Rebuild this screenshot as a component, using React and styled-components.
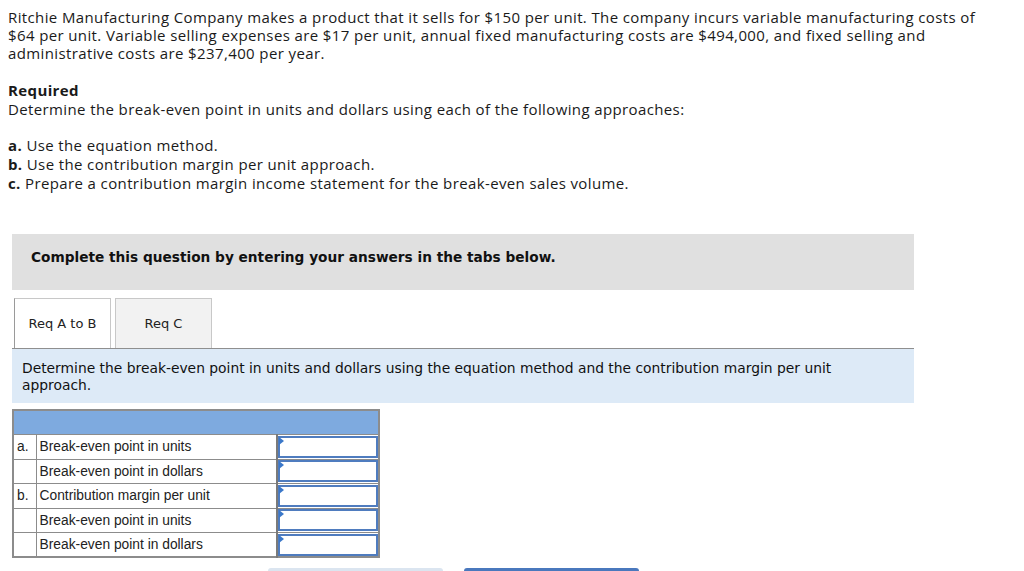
import React from 'react';
import styled, { createGlobalStyle } from 'styled-components';

const GlobalStyle = createGlobalStyle`
  body {
    margin: 0;
    background: #fff;
    color: #1a1a1a;
    font-family: "Open Sans", "Noto Sans", sans-serif;
  }
`;

const Page = styled.div`
  width: 1024px;
  height: 571px;
  overflow: hidden;
  padding: 8px 0 0 8px;
  box-sizing: border-box;
`;

const Prose = styled.p`
  margin: 0;
  font-size: 15px;
  letter-spacing: 0.38px;
  line-height: 18px;
  white-space: nowrap;
`;

const Block = styled.div`
  margin-top: ${(p) => p.$top}px;
  font-size: 15px;
  letter-spacing: 0.38px;
  line-height: 19px;
`;

const Strong = styled.b`
  font-weight: 700;
`;

const Prompt = styled.div`
  margin: 41px 0 0 4px;
  width: 902px;
  height: 56px;
  background: #e0e0e0;
  box-sizing: border-box;
  padding: 15px 0 0 19px;
  font-family: "DejaVu Sans", Verdana, sans-serif;
  font-size: 13.7px;
  font-weight: 700;
  color: #111;
`;

const TabBar = styled.div`
  display: flex;
  gap: 4px;
  margin: 8px 0 0 6px;
  height: 50px;
`;

const Tab = styled.div`
  width: 97px;
  height: 50px;
  box-sizing: border-box;
  display: flex;
  align-items: center;
  justify-content: center;
  font-family: "DejaVu Sans", Verdana, sans-serif;
  font-size: 13px;
  color: #222;
  border: 1px solid #c8c8c8;
  border-bottom: none;
  background: ${(p) => (p.$active ? '#fff' : '#f2f2f2')};
  border-left-color: ${(p) => (p.$active ? '#9a9a9a' : '#c8c8c8')};
`;

const Panel = styled.div`
  margin-left: 4px;
  width: 902px;
  height: 55px;
  box-sizing: border-box;
  background: #ddeaf7;
  border-top: 1px solid #8f8f8f;
  padding: 11px 60px 0 10px;
  font-family: "DejaVu Sans", Verdana, sans-serif;
  font-size: 13.85px;
  line-height: 17px;
  color: #111;
`;

const Table = styled.table`
  margin: 6px 0 0 4px;
  width: 368px;
  border-collapse: collapse;
  font-family: "Liberation Sans", Arial, sans-serif;
  font-size: 13.8px;
  color: #222;
  border: 2px solid #8c8c8c;
`;

const HeadCell = styled.th`
  height: 23px;
  background: #7eaadf;
  padding: 0;
`;

const Row = styled.tr`
  height: 24.5px;
  border-top: 1px solid #8c8c8c;
`;

const Letter = styled.td`
  width: 23px;
  padding: 0 0 0 3px;
  border-right: 1px solid #8c8c8c;
  box-sizing: border-box;
`;

const Label = styled.td`
  padding: 0 0 0 3px;
  border-right: 2px solid #7a7a7a;
`;

const InputCell = styled.td`
  width: 100px;
  padding: 0;
`;

const Field = styled.div`
  position: relative;
  height: 22px;
  border: 2px solid #4f7cbf;
  box-sizing: border-box;
  background: #fff;
  &::before {
    content: '';
    position: absolute;
    left: -1px;
    top: -1px;
    border-top: 4px solid transparent;
    border-bottom: 4px solid transparent;
    border-left: 5px solid #3b78c9;
  }
`;

const Buttons = styled.div`
  display: flex;
  gap: 21px;
  margin: 10px 0 0 260px;
`;

const Button = styled.div`
  width: 175px;
  height: 30px;
  border-radius: 3px;
  background: ${(p) => (p.$primary ? '#4a78bd' : '#dbe5f0')};
`;

const rows = [
  { letter: 'a.', label: 'Break-even point in units' },
  { letter: '', label: 'Break-even point in dollars' },
  { letter: 'b.', label: 'Contribution margin per unit' },
  { letter: '', label: 'Break-even point in units' },
  { letter: '', label: 'Break-even point in dollars' },
];

export default function App() {
  return (
    <Page>
      <GlobalStyle />
      <Prose>
        Ritchie Manufacturing Company makes a product that it sells for $150 per unit. The company incurs variable manufacturing costs of
        <br />
        $64 per unit. Variable selling expenses are $17 per unit, annual fixed manufacturing costs are $494,000, and fixed selling and
        <br />
        administrative costs are $237,400 per year.
      </Prose>
      <Block $top={19}>
        <Strong>Required</Strong>
        <br />
        Determine the break-even point in units and dollars using each of the following approaches:
      </Block>
      <Block $top={17}>
        <Strong>a.</Strong> Use the equation method.
        <br />
        <Strong>b.</Strong> Use the contribution margin per unit approach.
        <br />
        <Strong>c.</Strong> Prepare a contribution margin income statement for the break-even sales volume.
      </Block>
      <Prompt>Complete this question by entering your answers in the tabs below.</Prompt>
      <TabBar>
        <Tab $active>Req A to B</Tab>
        <Tab>Req C</Tab>
      </TabBar>
      <Panel>
        Determine the break-even point in units and dollars using the equation method and the contribution margin per unit approach.
      </Panel>
      <Table>
        <thead>
          <tr>
            <HeadCell colSpan={3} />
          </tr>
        </thead>
        <tbody>
          {rows.map((r, i) => (
            <Row key={i}>
              <Letter>{r.letter}</Letter>
              <Label>{r.label}</Label>
              <InputCell>
                <Field />
              </InputCell>
            </Row>
          ))}
        </tbody>
      </Table>
      <Buttons>
        <Button />
        <Button $primary />
      </Buttons>
    </Page>
  );
}
